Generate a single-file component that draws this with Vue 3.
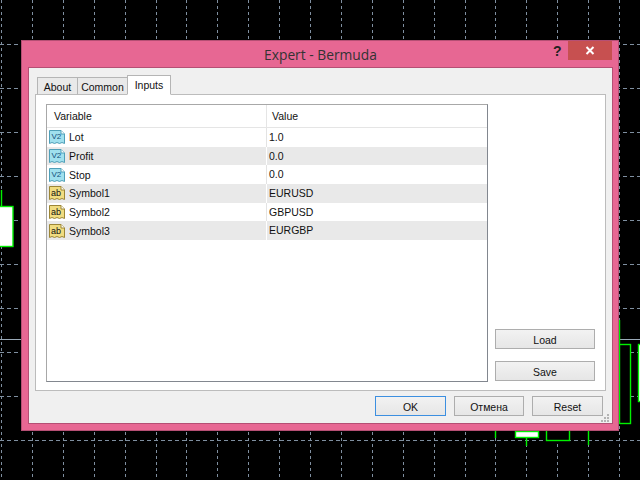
<script setup>
import { computed } from 'vue'

const rows = [
  { name: 'Lot', value: '1.0', type: 'num' },
  { name: 'Profit', value: '0.0', type: 'num' },
  { name: 'Stop', value: '0.0', type: 'num' },
  { name: 'Symbol1', value: 'EURUSD', type: 'str' },
  { name: 'Symbol2', value: 'GBPUSD', type: 'str' },
  { name: 'Symbol3', value: 'EURGBP', type: 'str' }
]

const tabs = ['About', 'Common', 'Inputs']
const activeTab = 'Inputs'

// grid of the chart behind the dialog
const gridX = computed(() => {
  const out = []
  for (let i = 0; i <= 20; i++) out.push(Math.round(1 + i * 30.9) + 0.5)
  return out
})
const gridY = computed(() => {
  const out = []
  for (let i = 1; i <= 10; i++) out.push(i * 44 + 0.5)
  return out
})
</script>

<template>
  <div class="screen">
    <svg class="chart" width="640" height="480" viewBox="0 0 640 480">
      <g stroke="#7f8fa0" stroke-width="1" stroke-dasharray="3 3">
        <line v-for="x in gridX" :key="'x' + x" :x1="x" y1="0" :x2="x" y2="480" />
        <line v-for="y in gridY" :key="'y' + y" x1="0" :y1="y" x2="640" :y2="y" stroke-dasharray="4 3" />
      </g>
      <g stroke="#9aa9b8" fill="none">
        <line x1="0" y1="339.5" x2="640" y2="339.5" />
      </g>
      <g stroke="#00f000" stroke-width="1.4">
        <line x1="1.5" y1="190" x2="1.5" y2="206" />
        <rect x="-2" y="206.5" width="15" height="40" fill="#fff" />
        <line x1="21" y1="229.5" x2="23" y2="229.5" />
        <line x1="619.5" y1="320" x2="619.5" y2="344" />
        <rect x="619.5" y="344.5" width="11" height="79" fill="#000" />
        <rect x="638.5" y="344.5" width="6" height="57" fill="#fff" />
        <line x1="495.5" y1="431" x2="495.5" y2="438" />
        <rect x="515.5" y="431.5" width="23" height="6" fill="#fff" />
        <line x1="526.5" y1="438" x2="526.5" y2="446" />
        <rect x="546.5" y="429.5" width="23" height="11" fill="#000" />
        <line x1="588.5" y1="431" x2="588.5" y2="445" />
      </g>
    </svg>

    <div class="dialog">
      <div class="titlebar">
        <span class="title">Expert - Bermuda</span>
        <span class="help">?</span>
        <span class="close">
          <svg width="10" height="9" viewBox="0 0 10 9">
            <path d="M1.5 1 L8.5 8 M8.5 1 L1.5 8" stroke="#fff" stroke-width="2" />
          </svg>
        </span>
      </div>

      <div class="client">
        <div class="tabs">
          <div
            v-for="tab in tabs"
            :key="tab"
            class="tab"
            :class="{ active: tab === activeTab }"
          >
            {{ tab }}
          </div>
        </div>

        <div class="panel">
          <div class="list">
            <div class="list-head">
              <div class="col-name">Variable</div>
              <div class="col-value">Value</div>
            </div>
            <div
              v-for="(row, index) in rows"
              :key="row.name"
              class="list-row"
              :class="{ odd: index % 2 === 1 }"
            >
              <div class="col-name">
                <svg class="type-icon" width="16" height="16" viewBox="0 0 16 16">
                  <path
                    d="M0.5 1.5 H12 L15.5 5 V14.5 L13 13.5 L10.5 14.5 L8 13.5 L5.5 14.5 L3 13.5 L0.5 14.5 Z"
                    :fill="row.type === 'num' ? '#a0e0ee' : '#f0dc80'"
                    :stroke="row.type === 'num' ? '#4f9fb8' : '#9c8636'"
                  />
                  <path d="M12 1.5 V5 H15.5" fill="#fff" :stroke="row.type === 'num' ? '#4f9fb8' : '#9c8636'" />
                  <text
                    v-if="row.type === 'num'"
                    x="2.5"
                    y="10"
                    class="icon-text small"
                    fill="#14507c"
                  >V2</text>
                  <text
                    v-else
                    x="2"
                    y="11"
                    class="icon-text"
                    fill="#111"
                  >ab</text>
                </svg>
                <span>{{ row.name }}</span>
              </div>
              <div class="col-value">{{ row.value }}</div>
            </div>
          </div>

          <div class="side">
            <button class="btn side-btn">Load</button>
            <button class="btn side-btn">Save</button>
          </div>
        </div>

        <div class="footer">
          <button class="btn ok">OK</button>
          <button class="btn cancel">Отмена</button>
          <button class="btn reset">Reset</button>
          <svg class="grip" width="8" height="8" viewBox="0 0 8 8">
            <g fill="#b4b4b4">
              <rect x="6" y="0" width="2" height="2" />
              <rect x="3" y="3" width="2" height="2" />
              <rect x="6" y="3" width="2" height="2" />
              <rect x="0" y="6" width="2" height="2" />
              <rect x="3" y="6" width="2" height="2" />
              <rect x="6" y="6" width="2" height="2" />
            </g>
          </svg>
        </div>
      </div>
    </div>
  </div>
</template>

<style>
html,
body {
  margin: 0;
  background: #000;
}
</style>

<style scoped>
.screen {
  position: relative;
  width: 640px;
  height: 480px;
  overflow: hidden;
  background: #000;
  font-family: "Liberation Sans", Arial, sans-serif;
  font-size: 10.5px;
  color: #111;
}

.chart {
  position: absolute;
  left: 0;
  top: 0;
}

.dialog {
  position: absolute;
  left: 21px;
  top: 40px;
  width: 598px;
  height: 391px;
  box-sizing: border-box;
  display: flex;
  flex-direction: column;
  background: #e76793;
  border: 1px solid #b54f74;
  padding: 0 5px 6px 6px;
}

.titlebar {
  position: relative;
  height: 26px;
  flex: none;
  display: flex;
  justify-content: center;
  align-items: center;
}

.title {
  font-family: "Open Sans", "Liberation Sans", sans-serif;
  font-size: 13.8px;
  color: #333;
}

.help {
  position: absolute;
  left: 525px;
  top: 1px;
  font-size: 14px;
  font-weight: bold;
  line-height: 19px;
  color: #222;
}

.close {
  position: absolute;
  right: 1px;
  top: 0;
  width: 44px;
  height: 19px;
  background: #c75050;
  display: flex;
  align-items: center;
  justify-content: center;
}

.client {
  flex: 1;
  display: flex;
  flex-direction: column;
  background: #f0f0f0;
  border: 1px solid #b54f74;
  min-height: 0;
}

.tabs {
  flex: none;
  display: flex;
  align-items: flex-end;
  height: 20px;
  padding: 7px 0 0 8px;
  position: relative;
  z-index: 1;
  margin-bottom: -1px;
}

.tab {
  box-sizing: border-box;
  height: 18px;
  line-height: 18px;
  text-align: center;
  background: #e9e9e9;
  border: 1px solid #b5b5b5;
  border-bottom: 1px solid #bcbcbc;
  margin-right: -1px;
  white-space: nowrap;
}

.tab:nth-child(1) {
  width: 41px;
}

.tab:nth-child(2) {
  width: 51px;
}

.tab.active {
  width: 44px;
  height: 20px;
  background: #fff;
  border-bottom-color: #fff;
  line-height: 18px;
}

.panel {
  flex: 1;
  min-height: 0;
  display: flex;
  gap: 7px;
  margin: 0 6px;
  padding: 9px 9px 8px 10px;
  background: #fff;
  border: 1px solid #bcbcbc;
}

.list {
  width: 442px;
  box-sizing: border-box;
  flex: none;
  border: 1px solid #82878f;
  border-top-color: #a8a8a8;
  border-left-color: #a8a8a8;
  background: #fff;
}

.list-head {
  display: flex;
  height: 22px;
  line-height: 23px;
  border-bottom: 1px solid #e5e5e5;
}

.list-head .col-name {
  padding-left: 7px;
  border-right: 1px solid #e5e5e5;
}

.list-head .col-value {
  padding-left: 5px;
}

.col-name {
  width: 220px;
  box-sizing: border-box;
  flex: none;
  display: flex;
  align-items: center;
  gap: 4px;
  padding-left: 2px;
}

.col-value {
  flex: 1;
  padding-left: 2px;
}

.list-row {
  display: flex;
  height: 18.7px;
  line-height: 18px;
}

.list-row .col-name {
  border-right: 1px solid #e3e3e3;
}

.list-row.odd {
  background: #e9e9e9;
}

.list-row.odd .col-name {
  border-right-color: #fff;
}

.type-icon {
  flex: none;
}

.icon-text {
  font-family: "Liberation Sans", sans-serif;
  font-size: 9px;
}

.icon-text.small {
  font-size: 8px;
}

.side {
  flex: 1;
  display: flex;
  flex-direction: column;
  justify-content: flex-end;
  gap: 12px;
  padding-bottom: 1px;
}

.btn {
  box-sizing: border-box;
  height: 20px;
  padding: 1px 0 0;
  font: inherit;
  color: #111;
  background: linear-gradient(#f2f2f2, #e6e6e6);
  border: 1px solid #adadad;
}

.side-btn {
  width: 100px;
}

.footer {
  position: relative;
  flex: none;
  height: 32px;
  box-sizing: border-box;
  padding: 5px 9px 0 0;
  display: flex;
  justify-content: flex-end;
  gap: 8px;
}

.ok {
  width: 71px;
  border-color: #3c8fe0;
}

.cancel {
  width: 70px;
}

.reset {
  width: 71px;
}

.grip {
  position: absolute;
  right: 3px;
  bottom: 1px;
}
</style>
